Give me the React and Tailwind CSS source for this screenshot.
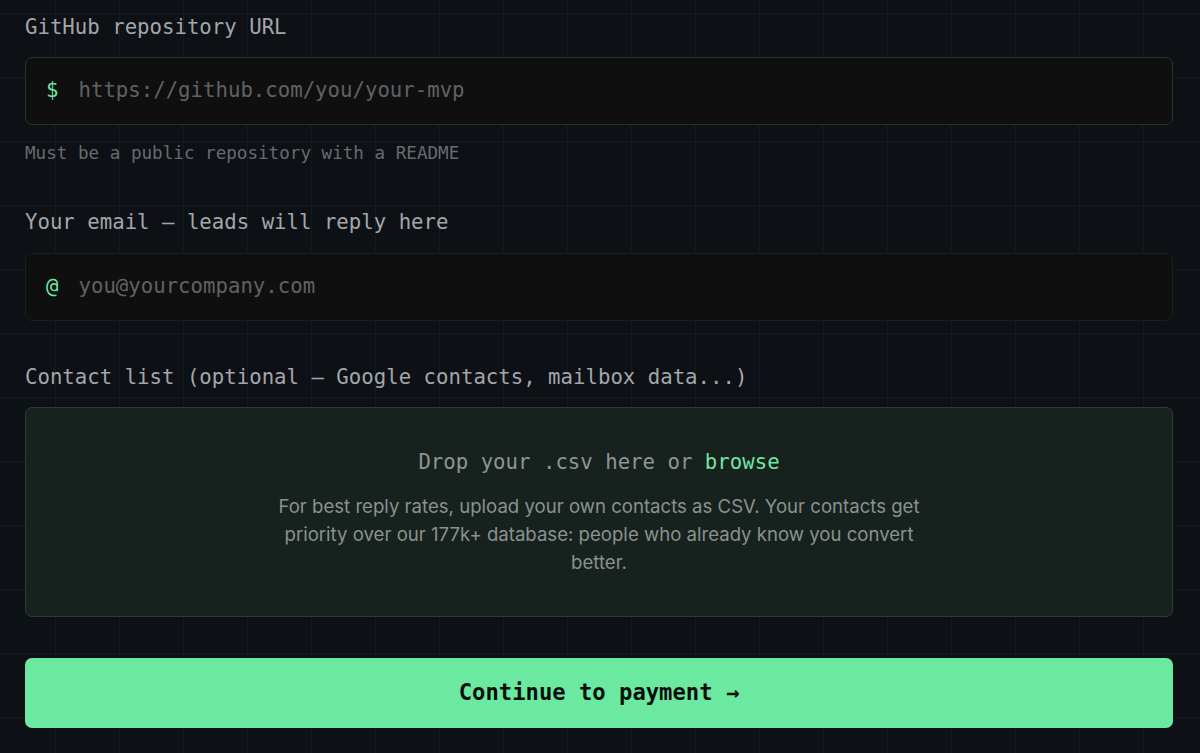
export default function App() {
  const mono = { fontFamily: '"DejaVu Sans Mono", "Liberation Mono", monospace' };
  return (
    <div
      className="min-h-[753px] w-full bg-[#0d1015] bg-[linear-gradient(to_right,#151a20_1px,transparent_1px),linear-gradient(to_bottom,#151a20_1px,transparent_1px)] bg-[size:64px_64px] bg-[position:55px_13px]"
    >
      <div className="pl-[25px] pr-[27px] pt-[13px]" style={mono}>
        <div className="text-[20.7px] leading-[28px] text-[#a3a6aa]">GitHub repository URL</div>
        <div className="mt-[16px] flex h-[68px] items-center rounded-[7px] border border-[#27362c] bg-[#0f0f0f] px-[20px]">
          <span className="text-[20.7px] text-[#6ee7a0]">$</span>
          <span className="ml-[20px] text-[20.7px] text-[#5f6265]">https://github.com/you/your-mvp</span>
        </div>
        <div className="mt-[16px] text-[17.6px] leading-[24px] text-[#676b6f]">Must be a public repository with a README</div>

        <div className="mt-[43px] text-[20.7px] leading-[28px] text-[#a3a6aa]">Your email — leads will reply here</div>
        <div className="mt-[17px] flex h-[68px] items-center rounded-[7px] border border-[#1c1f22] bg-[#0f0f0f] px-[20px]">
          <span className="text-[20.7px] text-[#6ee7a0]">@</span>
          <span className="ml-[20px] text-[20.7px] text-[#5f6265]">you@yourcompany.com</span>
        </div>

        <div className="mt-[42px] text-[20.7px] leading-[28px] text-[#a3a6aa]">
          Contact list (optional — Google contacts, mailbox data...)
        </div>
        <div className="mt-[16px] flex h-[210px] flex-col items-center justify-center rounded-[7px] border border-[#27402f] bg-[#17211e]">
          <div className="text-[20.7px] leading-[28px] text-[#8f9594]">
            Drop your .csv here or <span className="text-[#6ee7a0]">browse</span>
          </div>
          <p
            className="mt-[16px] max-w-[665px] text-center text-[18.6px] leading-[28px] text-[#8a928f]"
            style={{ fontFamily: 'Inter, "Noto Sans", sans-serif' }}
          >
            For best reply rates, upload your own contacts as CSV. Your contacts get priority over our 177k+ database: people who already know you convert better.
          </p>
        </div>

        <button className="mt-[41px] flex h-[70px] w-full items-center justify-center rounded-[7px] bg-[#6ce9a1] text-[22.2px] font-bold text-[#0b0f0c]" style={mono}>
          Continue to payment →
        </button>
      </div>
    </div>
  );
}
